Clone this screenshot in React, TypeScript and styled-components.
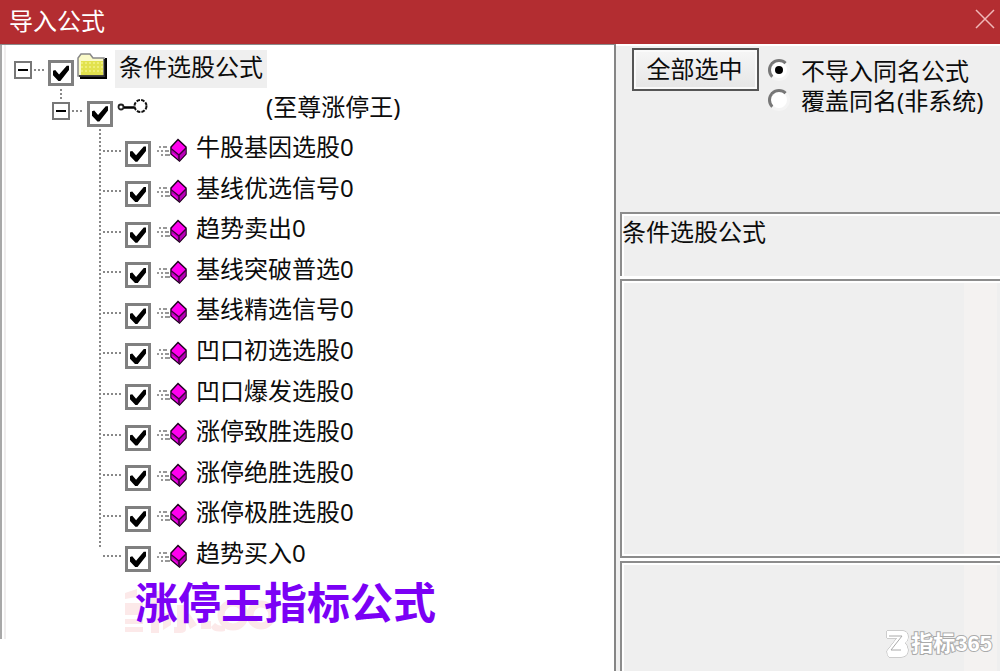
import React, { useState } from "react";
import styled, { createGlobalStyle } from "styled-components";

const GlobalStyle = createGlobalStyle`
  *, *::before, *::after { box-sizing: border-box; }
  body {
    margin: 0;
    background: #fff;
    color: #0c0c0c;
    font-family: "Noto Sans", "Noto Sans CJK SC", sans-serif;
    font-size: 24px;
    line-height: 32px;
  }
`;

const Dialog = styled.div`
  position: relative;
  display: flex;
  flex-direction: column;
  min-height: 100vh;
  overflow: hidden;
`;

const TitleBar = styled.header`
  display: flex;
  align-items: center;
  justify-content: space-between;
  height: 44px;
  padding: 0 4px 2px 9px;
  background: #b32d31;
  color: #fff;
`;

const Title = styled.h1`
  margin: 0;
  font-size: 24px;
  font-weight: 400;
  line-height: 40px;
`;

const CloseButton = styled.button`
  display: flex;
  padding: 0;
  border: 0;
  background: none;
  margin-bottom: 4px;
`;

const Body = styled.div`
  display: flex;
  flex: 1;
`;

const TreePanel = styled.main`
  flex: 0 0 616px;
  border-top: 1px solid #8a8a8a;
  border-right: 2px solid #858585;
  padding-top: 3px;
  background:
    linear-gradient(#a8a8a8, #a8a8a8) 0 0 / 2px calc(100% - 32px) no-repeat,
    linear-gradient(#f0eeee, #f0eeee) 4px 0 / 2px calc(100% - 32px) no-repeat,
    #fff;
`;

const TreeRow = styled.div<{ $indent: number; $height: number }>`
  display: flex;
  align-items: center;
  height: ${(p) => p.$height}px;
  padding-left: ${(p) => p.$indent}px;
`;

const Expander = styled.button`
  display: grid;
  place-items: center;
  width: 18px;
  height: 18px;
  margin-top: 3px;
  padding: 0;
  border: 2px solid #777;
  background: #fff;

  &::before {
    content: "";
    width: 10px;
    height: 2px;
    background: #000;
  }
`;

const Branch = styled.span<{ $width: number }>`
  width: ${(p) => p.$width}px;
  height: 2px;
  margin: 3px 4px 0 2px;
  background: repeating-linear-gradient(90deg, #888 0 2px, transparent 2px 4px);
`;

const CheckBox = styled.input`
  appearance: none;
  display: grid;
  place-items: center;
  flex: none;
  width: 26px;
  height: 26px;
  margin: 9px 0 0;
  border: 3px solid #808080;
  background: #fff;

  &:checked::before {
    content: "";
    width: 16px;
    height: 16px;
    background: #000;
    clip-path: polygon(0 36%, 14% 32%, 38% 60%, 86% 4%, 100% 4%, 100% 32%, 46% 100%, 34% 100%, 0 64%);
  }
`;

const NodeLabel = styled.label<{ $selected?: boolean }>`
  padding: 0 4px 4px;
  line-height: 34px;
  white-space: pre;
  background: ${(p) => (p.$selected ? "#efefef" : "none")};
`;

const RootIcon = styled.svg`
  margin: 0 8px 6px 3px;
`;

const KeyIcon = styled.svg`
  margin: 0 114px 6px 4px;
`;

const ItemIcon = styled.svg`
  margin: 2px 4px 0 5px;
`;

const Stem = styled.div`
  background: repeating-linear-gradient(#888 0 2px, transparent 2px 4px) 60px 41px / 2px 12px no-repeat;
`;

const ItemList = styled.ul`
  display: grid;
  grid-template-rows: repeat(11, 1fr);
  height: 446px;
  margin: 0;
  padding: 0 0 0 101px;
  list-style: none;
  background: repeating-linear-gradient(#888 0 2px, transparent 2px 4px) 99px 0 / 2px 419px no-repeat;
`;

const Item = styled.li`
  display: flex;
  align-items: center;
`;

const Caption = styled.div`
  position: relative;
  padding-left: 135px;
`;

const CaptionText = styled.h2`
  position: relative;
  margin: 0;
  color: #7b00f5;
  font-family: "Noto Sans CJK SC", sans-serif;
  font-size: 43px;
  font-weight: 700;
  line-height: 50px;
`;

const CaptionShade = styled.svg`
  position: absolute;
  top: 12px;
  left: 125px;
`;

const SidePanel = styled.aside`
  display: flex;
  flex: 1;
  flex-direction: column;
  min-width: 0;
  border-top: 2px solid #fff;
  background: #efefef;
`;

const Controls = styled.section`
  display: flex;
  align-items: flex-start;
  height: 166px;
  padding: 2px 0 0 16px;
`;

const SelectAllButton = styled.button`
  flex: none;
  width: 127px;
  height: 43px;
  padding: 0 2px 2px 0;
  border: 2px solid #555;
  background: linear-gradient(#f6f6f6, #e6e6e6);
  box-shadow: inset 0 0 0 2px #fafafa;
  color: inherit;
  font: inherit;
`;

const Options = styled.fieldset`
  margin: 0;
  padding: 8px 0 0 9px;
  border: 0;
  min-width: 0;
`;

const Option = styled.label`
  display: flex;
  align-items: center;
  gap: 11px;
  height: 30px;
  white-space: nowrap;
`;

const Radio = styled.input`
  appearance: none;
  display: grid;
  place-items: center;
  width: 22px;
  height: 22px;
  margin: 0 0 2px;
  border: 3px solid;
  border-color: #777 #f4f4f4 #f4f4f4 #777;
  border-radius: 50%;
  background: #fff;

  &:checked::before {
    content: "";
    width: 8px;
    height: 8px;
    border-radius: 50%;
    background: #000;
  }
`;

const Details = styled.div`
  display: flex;
  flex: 1;
  flex-direction: column;
  gap: 3px;
  padding-left: 4px;
`;

const SunkenBox = styled.section<{ $height?: number; $closed?: boolean }>`
  flex: ${(p) => (p.$height ? "none" : "1")};
  height: ${(p) => (p.$height ? `${p.$height}px` : "auto")};
  border: solid #8c8c8c;
  border-width: 2px 0 ${(p) => (p.$closed ? 2 : 0)}px 2px;
  box-shadow: inset 2px 2px #fff, inset 0 ${(p) => (p.$closed ? -2 : 0)}px #fff, 0 3px #fff;
  background: linear-gradient(#f4f2f1, #f4f2f1) right 3px top 0 / 33px 100% no-repeat #efefef;
`;

const KindBox = styled.section`
  height: 64px;
  border: solid #8c8c8c;
  border-width: 2px 0 0 2px;
  box-shadow: inset 2px 2px #fff, 0 3px #fff;
  padding-top: 2px;
`;

const Watermark = styled.div`
  position: absolute;
  right: 8px;
  bottom: 11px;
  display: flex;
  align-items: center;
  gap: 2px;
  color: #fff;
  font-family: "Liberation Sans", "Noto Sans CJK SC", sans-serif;
  font-size: 22px;
  font-weight: 700;
  -webkit-text-stroke: 2px #aaa;
  paint-order: stroke fill;
`;

const items = [
  "牛股基因选股0",
  "基线优选信号0",
  "趋势卖出0",
  "基线突破普选0",
  "基线精选信号0",
  "凹口初选选股0",
  "凹口爆发选股0",
  "涨停致胜选股0",
  "涨停绝胜选股0",
  "涨停极胜选股0",
  "趋势买入0",
];

function Gem() {
  return (
    <ItemIcon width="32" height="24" viewBox="0 0 32 24" aria-hidden="true">
      <path d="M3 9h2M7 9h4M1 13h2M5 13h2M9 13h4M5 17h2M9 17h5" stroke="#777" strokeWidth="1.5" />
      <path d="M22 1.500L30 9v7L23.500 23 15 16V9z" fill="#f0e" stroke="#1c001c" strokeWidth="1.500" />
      <path d="M15.500 12l7.500 6 6.500-7V16L23.500 22.500l-8-7z" fill="#b800b8" />
      <path d="M15.500 11l7.500 6 7-7M23 17v5" fill="none" stroke="#3a003a" strokeWidth="1.500" />
      <path d="M16.500 14.500l5 4v1.500l-5-4z" fill="#f0e" />
    </ItemIcon>
  );
}

export default function App() {
  const [mode, setMode] = useState("skip");
  return (
    <Dialog>
      <GlobalStyle />
      <TitleBar>
        <Title>导入公式</Title>
        <CloseButton aria-label="关闭">
          <svg width="22" height="20" viewBox="0 0 22 20" aria-hidden="true">
            <path d="M2 1l18 18M20 1L2 19" stroke="#f0b8b8" strokeWidth="1.500" />
          </svg>
        </CloseButton>
      </TitleBar>
      <Body>
        <TreePanel>
          <Stem>
            <TreeRow $indent={14} $height={41}>
              <Expander aria-label="折叠" />
              <Branch $width={10} />
              <CheckBox type="checkbox" id="root" defaultChecked />
              <RootIcon width="30" height="28" viewBox="0 0 30 28" aria-hidden="true">
                <path d="M3 27h27V6h-2v18H3z" fill="#000" />
                <path d="M1 24V6l3-4h9l3 4h11v18z" fill="#fafac8" stroke="#888" strokeWidth="1.500" />
                <path d="M4 9h22v14H4z" fill="#e2e24e" />
                <path d="M4 11h22M4 15h22M4 19h22" stroke="#eeee78" strokeWidth="2" strokeDasharray="2 2" />
                <path d="M2 24h25.500V7" fill="none" stroke="#222" strokeWidth="1.500" />
              </RootIcon>
              <NodeLabel htmlFor="root" $selected>条件选股公式</NodeLabel>
            </TreeRow>
            <TreeRow $indent={52} $height={40}>
              <Expander aria-label="折叠" />
              <Branch $width={11} />
              <CheckBox type="checkbox" id="group" defaultChecked />
              <KeyIcon width="31" height="16" viewBox="0 0 31 16" aria-hidden="true">
                <circle cx="4" cy="9" r="2.500" fill="#fff" stroke="#222" strokeWidth="1.800" />
                <path d="M7 9.500h11" stroke="#000" strokeWidth="2.500" />
                <circle cx="23.500" cy="8" r="6" fill="#fff" stroke="#111" strokeWidth="2" strokeDasharray="3.500 1.200" />
              </KeyIcon>
              <NodeLabel htmlFor="group">(至尊涨停王)</NodeLabel>
            </TreeRow>
          </Stem>
          <ItemList>
            {items.map((name, i) => (
              <Item key={name}>
                <Branch $width={18} />
                <CheckBox type="checkbox" id={`item-${i}`} defaultChecked />
                <Gem />
                <NodeLabel htmlFor={`item-${i}`}>{name}</NodeLabel>
              </Item>
            ))}
          </ItemList>
          <Caption>
            <CaptionShade width="150" height="48" viewBox="0 0 150 48" fill="#fce9e9" aria-hidden="true">
              <path d="M0 6l12-4v8L0 12zM0 16h18v12H0zM0 32h18v5H0zM0 40h18v5H0z" />
              <path d="M26 4h8v42h-8zM38 26h8v12l-8 5zM52 18h9v24q0 4-6 4h-6v-6h3zM64 26l8 12-7 4-4-10z" />
              <path d="M76 34h10v8H76zM90 36q4 4 10 2v6q-12 2-14-4z" />
              <circle cx="108" cy="28" r="12" fill="none" stroke="#fce9e9" strokeWidth="7" />
              <circle cx="136" cy="28" r="11" fill="none" stroke="#fce9e9" strokeWidth="7" />
            </CaptionShade>
            <CaptionText>涨停王指标公式</CaptionText>
          </Caption>
        </TreePanel>
        <SidePanel>
          <Controls>
            <SelectAllButton>全部选中</SelectAllButton>
            <Options>
              <Option>
                <Radio type="radio" name="mode" checked={mode === "skip"} onChange={() => setMode("skip")} />
                不导入同名公式
              </Option>
              <Option>
                <Radio type="radio" name="mode" checked={mode === "replace"} onChange={() => setMode("replace")} />
                覆盖同名(非系统)
              </Option>
            </Options>
          </Controls>
          <Details>
            <KindBox>条件选股公式</KindBox>
            <SunkenBox $height={279} $closed />
            <SunkenBox />
          </Details>
        </SidePanel>
      </Body>
      <Watermark>
        <svg width="23" height="28" viewBox="0 0 23 28" aria-hidden="true">
          <path
            d="M1 1h16q5 0 5 6 0 4-3 6 3 3 3 7 0 7-7 7H3q-2-2-2-6L11 8H1z"
            fill="#fff"
            stroke="#aaa"
          />
          <path d="M3 6h13L5 20h10" fill="none" stroke="#aaa" />
        </svg>
        指标365
      </Watermark>
    </Dialog>
  );
}
